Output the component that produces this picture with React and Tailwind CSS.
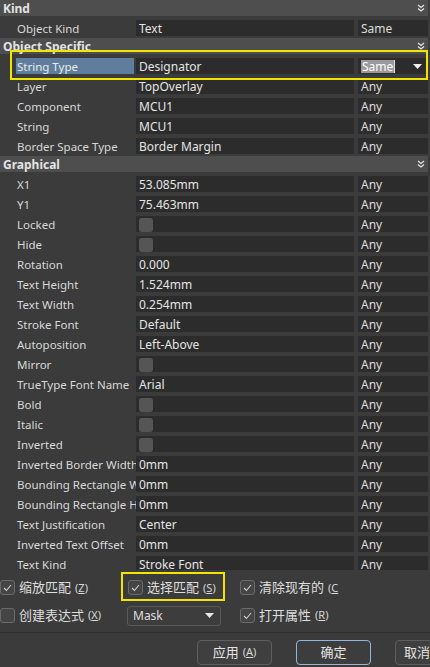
import React from 'react';

const font = { fontFamily: '"Noto Sans", "Noto Sans CJK SC", sans-serif' };

const sections = [
  {
    title: 'Kind',
    rows: [{ label: 'Object Kind', value: 'Text', match: 'Same' }],
  },
  {
    title: 'Object Specific',
    rows: [
      { label: 'String Type', value: 'Designator', match: 'Same', selected: true },
      { label: 'Layer', value: 'TopOverlay' },
      { label: 'Component', value: 'MCU1' },
      { label: 'String', value: 'MCU1' },
      { label: 'Border Space Type', value: 'Border Margin' },
    ],
  },
  {
    title: 'Graphical',
    rows: [
      { label: 'X1', value: '53.085mm' },
      { label: 'Y1', value: '75.463mm' },
      { label: 'Locked', check: true },
      { label: 'Hide', check: true },
      { label: 'Rotation', value: '0.000' },
      { label: 'Text Height', value: '1.524mm' },
      { label: 'Text Width', value: '0.254mm' },
      { label: 'Stroke Font', value: 'Default' },
      { label: 'Autoposition', value: 'Left-Above' },
      { label: 'Mirror', check: true },
      { label: 'TrueType Font Name', value: 'Arial' },
      { label: 'Bold', check: true },
      { label: 'Italic', check: true },
      { label: 'Inverted', check: true },
      { label: 'Inverted Border Width', value: '0mm' },
      { label: 'Bounding Rectangle Width', value: '0mm' },
      { label: 'Bounding Rectangle Height', value: '0mm' },
      { label: 'Text Justification', value: 'Center' },
      { label: 'Inverted Text Offset', value: '0mm' },
      { label: 'Text Kind', value: 'Stroke Font' },
    ],
  },
];

const Chevrons = () => (
  <svg width="8" height="8" viewBox="0 0 8 8" fill="none" stroke="#e6e6e6" strokeWidth="1.2">
    <polyline points="1,1 4,3.5 7,1" />
    <polyline points="1,4.5 4,7 7,4.5" />
  </svg>
);

const Header = ({ title }) => (
  <div className="h-[18px] pr-[2px]">
    <div className="h-[16px] bg-[#4e4e4e] flex items-center justify-between pl-[3px] pr-[3px]">
      <span className="text-[12px] font-bold text-[#e2e2e2] leading-none pt-[1px]">{title}</span>
      <Chevrons />
    </div>
  </div>
);

const Row = ({ row }) => (
  <div className="h-[20px] flex items-center text-[12px] leading-none">
    {row.selected ? (
      <div className="w-[136px] h-[16px] pl-[16px] pr-[2px]">
        <div className="h-full bg-[#5f7e9d] flex items-center pl-[1px] pt-[1px] text-[11.5px] text-[#eaeaea] whitespace-nowrap overflow-hidden">
          {row.label}
        </div>
      </div>
    ) : (
      <div className="w-[136px] h-[16px] pl-[17px] pt-[1px] flex items-center text-[11.5px] text-[#d8d8d8] whitespace-nowrap overflow-hidden">
        {row.label}
      </div>
    )}
    <div className="w-[218px] h-[16px] bg-[#2c2c2c] flex items-center pl-[3px] pt-[1px] text-[#e4e4e4] whitespace-nowrap overflow-hidden">
      {row.check ? <div className="w-[14px] h-[14px] rounded-[3px] bg-[#555555]" /> : row.value}
    </div>
    <div className="ml-[4px] w-[70px] h-[16px] bg-[#2c2c2c] flex items-center pl-[3px] pt-[1px] text-[#dcdcdc]">
      {row.selected ? (
        <div className="flex items-center w-full">
          <span className="bg-[#9a9a9a] text-white px-[1px] h-[13px] flex items-center">Same</span>
          <span className="w-[1px] h-[13px] bg-[#e0e0e0]" />
          <svg className="ml-auto mr-[6px]" width="9" height="5" viewBox="0 0 9 5">
            <polygon points="0,0 9,0 4.5,5" fill="#f0f0f0" />
          </svg>
        </div>
      ) : (
        row.match || 'Any'
      )}
    </div>
  </div>
);

const Check = ({ checked = true }) => (
  <div className="w-[15px] h-[15px] rounded-[3px] border border-[#6a6a6a] bg-[#454545] flex items-center justify-center shrink-0">
    {checked && (
      <svg width="9" height="8" viewBox="0 0 9 8" fill="none" stroke="#cfcfcf" strokeWidth="1.1">
        <polyline points="1,4 3.5,6.5 8,1" />
      </svg>
    )}
  </div>
);

const Key = ({ k, close = true }) => (
  <span className="text-[11px] ml-[4px] text-[#d8d8d8]">
    (<span className="underline">{k}</span>{close ? ')' : ''}
  </span>
);

const Button = ({ children, focus, left }) => (
  <div
    className={`w-[75px] h-[25px] shrink-0 rounded-[4px] border flex items-center text-[13px] text-[#e4e4e4] ${
      left ? 'justify-start pl-[8px]' : 'justify-center'
    } ${focus ? 'border-[#8fb6dd] bg-[#3d3d3d]' : 'border-[#5e5e5e] bg-[#3f3f3f]'}`}
  >
    {children}
  </div>
);

export default function App() {
  return (
    <div className="w-[430px] h-[667px] bg-[#3b3b3b] overflow-hidden relative" style={font}>
      <div className="h-[570px] overflow-hidden">
        {sections.map((s) => (
          <div key={s.title}>
            <Header title={s.title} />
            {s.rows.map((r) => (
              <Row key={r.label} row={r} />
            ))}
          </div>
        ))}
      </div>

      <div className="h-[62px] relative text-[13px] text-[#dedede]">
        <div className="flex pt-[8px]">
          <div className="w-[128px] flex items-center">
            <Check />
            <span className="ml-[4px]">缩放匹配</span>
            <Key k="Z" />
          </div>
          <div className="w-[112px] flex items-center">
            <Check />
            <span className="ml-[4px]">选择匹配</span>
            <Key k="S" />
          </div>
          <div className="flex items-center whitespace-nowrap">
            <Check />
            <span className="ml-[4px]">清除现有的</span>
            <Key k="C" close={false} />
          </div>
        </div>
        <div className="flex items-center mt-[8px]">
          <div className="w-[127px] flex items-center">
            <Check checked={false} />
            <span className="ml-[4px]">创建表达式</span>
            <Key k="X" />
          </div>
          <div className="w-[113px]">
            <div className="w-[94px] h-[20px] rounded-[3px] border border-[#5a5a5a] bg-[#3d3d3d] flex items-center pl-[5px] pr-[6px] text-[12px]">
              Mask
              <svg className="ml-auto" width="9" height="5" viewBox="0 0 9 5">
                <polygon points="0,0 9,0 4.5,5" fill="#e8e8e8" />
              </svg>
            </div>
          </div>
          <div className="flex items-center">
            <Check />
            <span className="ml-[4px]">打开属性</span>
            <Key k="R" />
          </div>
        </div>
        <div className="absolute left-[121px] top-[2px] w-[104px] h-[29px] border-2 border-[#f2e600]" />
      </div>

      <div className="h-[35px] border-t border-[#2e2e2e] flex items-start pt-[7px] pl-[197px] gap-[24px]">
        <Button>
          应用<Key k="A" />
        </Button>
        <Button focus>确定</Button>
        <Button left>取消</Button>
      </div>

      <div className="absolute left-[10px] top-[50px] w-[418px] h-[30px] border-2 border-[#f2e600] pointer-events-none" />
    </div>
  );
}
